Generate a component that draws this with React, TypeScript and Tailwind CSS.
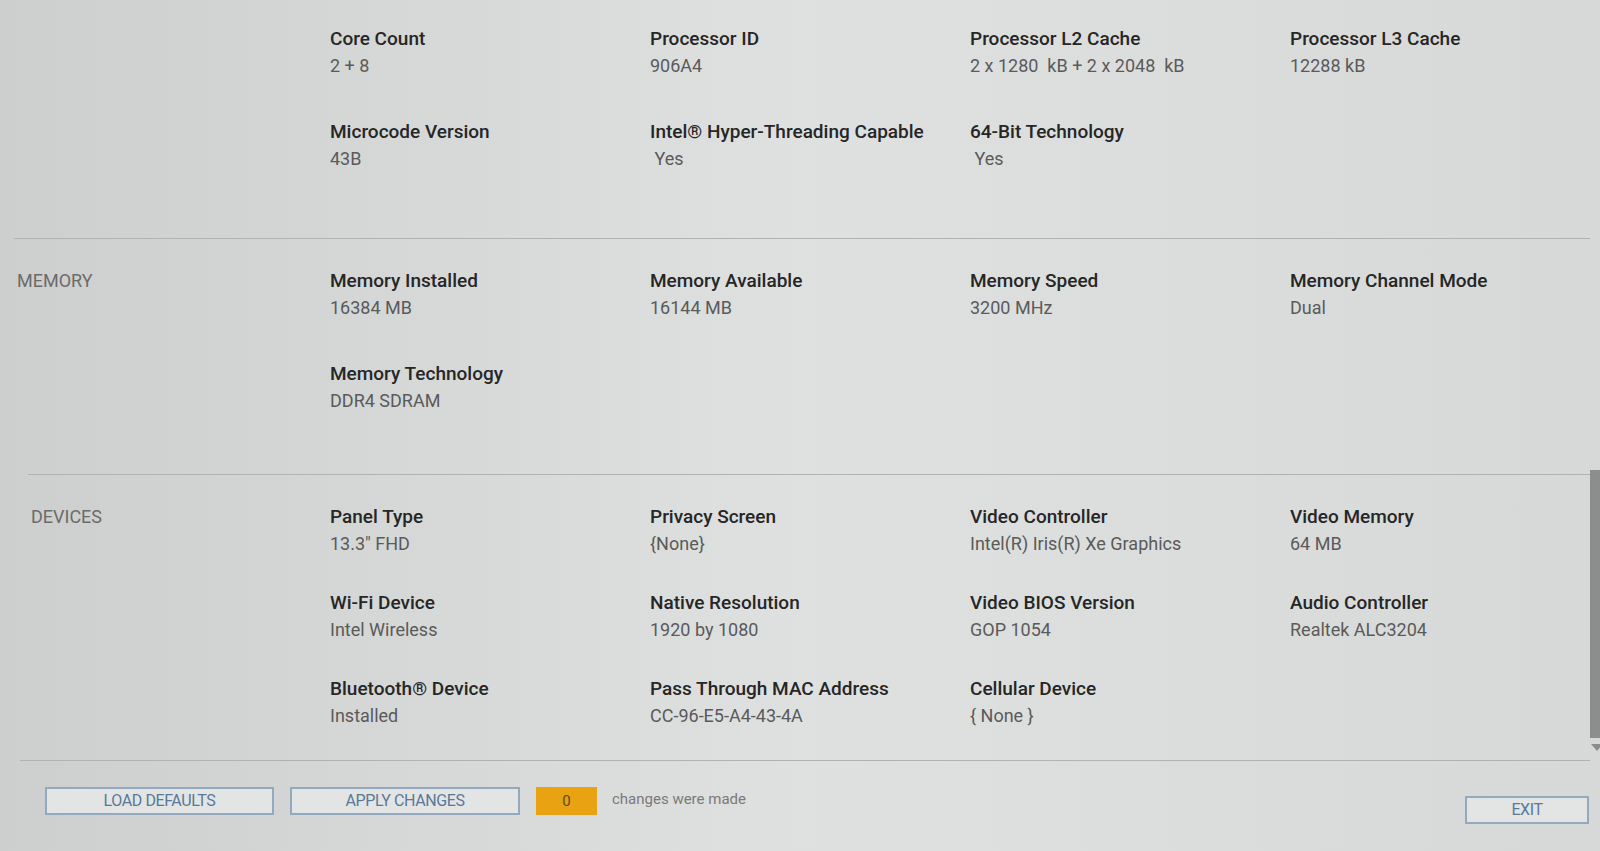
import React from 'react';

type Field = { label: string; value: string };

type Section = {
  title?: string;
  rows: Field[][];
  pad: string;
  gap: string;
  rule: string;
  head: string;
};

const sections: Section[] = [
  {
    rows: [
      [
        { label: 'Core Count', value: '2 + 8' },
        { label: 'Processor ID', value: '906A4' },
        { label: 'Processor L2 Cache', value: '2 x 1280  kB + 2 x 2048  kB' },
        { label: 'Processor L3 Cache', value: '12288 kB' },
      ],
      [
        { label: 'Microcode Version', value: '43B' },
        { label: 'Intel® Hyper-Threading Capable', value: ' Yes' },
        { label: '64-Bit Technology', value: ' Yes' },
      ],
    ],
    pad: 'pt-[27px] pb-[67px]',
    gap: 'gap-y-[42px]',
    rule: 'ml-[14px]',
    head: 'pl-[17px]',
  },
  {
    title: 'MEMORY',
    rows: [
      [
        { label: 'Memory Installed', value: '16384 MB' },
        { label: 'Memory Available', value: '16144 MB' },
        { label: 'Memory Speed', value: '3200 MHz' },
        { label: 'Memory Channel Mode', value: 'Dual' },
      ],
      [{ label: 'Memory Technology', value: 'DDR4 SDRAM' }],
    ],
    pad: 'pt-[30px] pb-[61px]',
    gap: 'gap-y-[42px]',
    rule: 'ml-[28px]',
    head: 'pl-[17px]',
  },
  {
    title: 'DEVICES',
    rows: [
      [
        { label: 'Panel Type', value: '13.3" FHD' },
        { label: 'Privacy Screen', value: '{None}' },
        { label: 'Video Controller', value: 'Intel(R) Iris(R) Xe Graphics' },
        { label: 'Video Memory', value: '64 MB' },
      ],
      [
        { label: 'Wi-Fi Device', value: 'Intel Wireless' },
        { label: 'Native Resolution', value: '1920 by 1080' },
        { label: 'Video BIOS Version', value: 'GOP 1054' },
        { label: 'Audio Controller', value: 'Realtek ALC3204' },
      ],
      [
        { label: 'Bluetooth® Device', value: 'Installed' },
        { label: 'Pass Through MAC Address', value: 'CC-96-E5-A4-43-4A' },
        { label: 'Cellular Device', value: '{ None }' },
      ],
    ],
    pad: 'pt-[30px] pb-[32px]',
    gap: 'gap-y-[35px]',
    rule: 'ml-[20px]',
    head: 'pl-[31px]',
  },
];

const InfoItem = ({ label, value }: Field) => (
  <div className="flex flex-col">
    <span className="text-[19px] leading-[24px] font-medium text-[#262626] whitespace-nowrap">{label}</span>
    <span className="mt-[3px] text-[18px] leading-[24px] text-[#5a5a5a] whitespace-pre">{value}</span>
  </div>
);

const InfoSection = ({ section }: { section: Section }) => (
  <div className={`flex shrink-0 ${section.pad}`}>
    <div className={`w-[330px] shrink-0 ${section.head}`}>
      {section.title && (
        <span className="block text-[18px] leading-[24px] text-[#6b6b6b]">{section.title}</span>
      )}
    </div>
    <div className={`grid grid-cols-[320px_320px_320px_300px] ${section.gap}`}>
      {section.rows.map((row, i) => (
        <React.Fragment key={i}>
          {row.map((f) => (
            <InfoItem key={f.label} {...f} />
          ))}
          {Array.from({ length: 4 - row.length }).map((_, j) => (
            <div key={`e${j}`} />
          ))}
        </React.Fragment>
      ))}
    </div>
  </div>
);

const Button = ({ children, width }: { children: React.ReactNode; width: string }) => (
  <button
    className={`${width} h-[28px] border-2 border-[#93a9bf] bg-[#e3e5e4] text-[16px] tracking-tight text-[#58799a] uppercase`}
  >
    {children}
  </button>
);

export default function App() {
  return (
    <div
      className="w-[1600px] h-[851px] overflow-hidden flex flex-col bg-linear-to-r from-[#cdcfce] via-[#dfe1e0] to-[#d7d9d8]"
      style={{ fontFamily: 'Roboto, "Liberation Sans", sans-serif' }}
    >
      <div className="flex shrink-0">
        <div className="flex-1 flex flex-col">
          {sections.map((s, i) => (
            <React.Fragment key={i}>
              <InfoSection section={s} />
              <div className={`h-px shrink-0 bg-[#b1b3b2] ${s.rule}`} />
            </React.Fragment>
          ))}
        </div>
        <div className="w-[18px] flex flex-col items-center">
          <div className="h-[470px]" />
          <div className="w-full h-[268px] bg-[#8c8e8e]" />
          <svg width="14" height="10" viewBox="0 0 14 10" className="mt-[4px]">
            <path d="M1 2 L13 2 L7 9 Z" fill="#8a8c8c" />
          </svg>
        </div>
      </div>

      <div className="flex items-start pt-[26px] pl-[45px] pr-[11px]">
        <Button width="w-[229px]">Load Defaults</Button>
        <div className="w-[16px]" />
        <Button width="w-[230px]">Apply Changes</Button>
        <div className="ml-[16px] w-[61px] h-[28px] bg-[#e9a312] flex items-center justify-center text-[15px] text-[#5e4a1c]">
          0
        </div>
        <span className="ml-[15px] text-[15px] leading-[24px] text-[#7a7a7a]">changes were made</span>
        <div className="flex-1" />
        <div className="mt-[9px]">
          <Button width="w-[124px]">Exit</Button>
        </div>
      </div>
    </div>
  );
}
